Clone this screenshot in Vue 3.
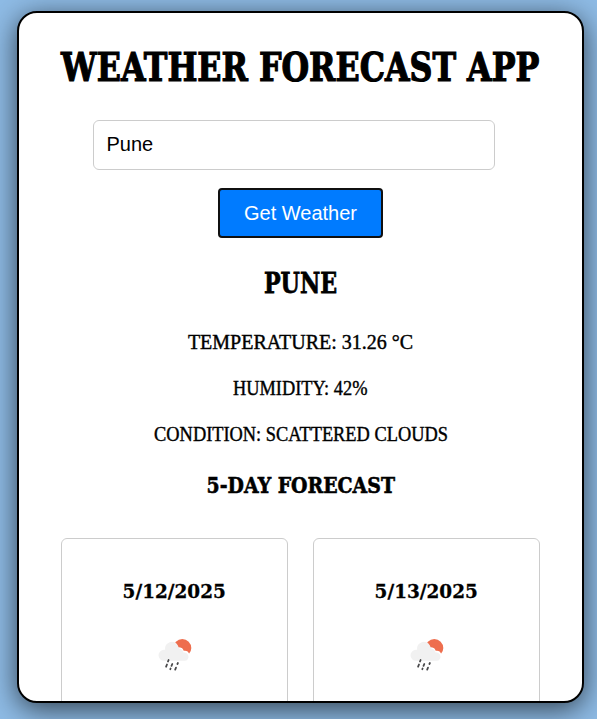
<script setup>
import { ref } from 'vue'

const city = ref('Pune')
const days = ['5/12/2025', '5/13/2025']
</script>

<template>
  <div class="page">
    <main class="panel">
      <h1><span>WEATHER FORECAST APP</span></h1>
      <input v-model="city" class="city" type="text" />
      <button class="go">Get Weather</button>
      <h2><span>PUNE</span></h2>
      <p class="temp"><span>TEMPERATURE: 31.26 °C</span></p>
      <p class="hum"><span>HUMIDITY: 42%</span></p>
      <p class="cond"><span>CONDITION: SCATTERED CLOUDS</span></p>
      <h3><span>5-DAY FORECAST</span></h3>
      <div class="days">
        <section v-for="day in days" :key="day" class="day">
          <h4><span>{{ day }}</span></h4>
          <svg class="icon" viewBox="0 0 50 50">
            <circle cx="32.300" cy="18" r="9" fill="#ee6e4e" />
            <path
              d="M24 22 l2-6 q2.500 2 3.500 1.200 a5 5 0 0 1 4.200 3.600 a5 5 0 0 1 5.600 3.300 l2 1.500 v5 h-12z"
              fill="#fff"
            />
            <path
              d="M14 30.800 a5.500 5.500 0 0 1 0-11 h1.100 a6.800 6.800 0 0 1 12.800-4.200 l1.200 3 a5 5 0 0 1 4.400 4 a4 4 0 0 1 4.900 3.300 a4 4 0 0 1-3.600 4.900z"
              fill="#f1f1f1"
            />
            <path
              d="M18.600 30 l-.6 1.500 M17 34.500 l-.9 2.200 M22.300 34 l-.8 1.900 M27.900 33 l-.5 1 M20.600 38.500 l-.3.700 M26 37.700 l-.8 1.900"
              stroke="#48484a"
              stroke-width="1.800"
              stroke-linecap="round"
            />
          </svg>
        </section>
      </div>
    </main>
  </div>
</template>

<style>
body {
  margin: 0;
  overflow: hidden;
}
</style>

<style scoped>
.page {
  box-sizing: border-box;
  height: 719px;
  padding: 11px 13px 16px 17px;
  background: #8ebbe5;
  overflow: hidden;
}
.panel {
  box-sizing: border-box;
  height: 692px;
  width: 567px;
  display: flex;
  flex-direction: column;
  align-items: center;
  padding: 26px 42px 0;
  border: 2px solid #000;
  border-radius: 20px;
  background: #fff;
  box-shadow: 0 6px 28px rgba(0, 0, 0, 0.65);
  overflow: hidden;
  color: #000;
}
h1, h2, h3, h4, p {
  margin: 0;
  flex: none;
  display: flex;
  align-items: center;
  justify-content: center;
  white-space: nowrap;
  font-family: "DejaVu Serif", serif;
  font-weight: 700;
}
h1 span, h2 span, h3 span, h4 span, p span {
  display: block;
}
h1 {
  height: 56px;
  font-size: 38.5px;
  -webkit-text-stroke: 1.2px #000;
}
h1 span {
  transform: scaleX(0.824);
}
.city {
  box-sizing: border-box;
  flex: none;
  width: 402px;
  height: 50px;
  margin: 25px 14px 0 0;
  padding: 0 13px 2px;
  border: 1px solid #ccc;
  border-radius: 6px;
  outline: none;
  background: #fff;
  color: #000;
  font: 20px "Liberation Sans", sans-serif;
}
.go {
  box-sizing: border-box;
  flex: none;
  width: 165px;
  height: 50px;
  margin: 18px 0 0;
  padding: 0;
  border: 2px solid #101010;
  border-radius: 4px;
  background: #007bff;
  color: #fff;
  font: 20px "Liberation Sans", sans-serif;
}
h2 {
  height: 40px;
  margin-top: 25px;
  font-size: 28.8px;
  -webkit-text-stroke: 0.8px #000;
}
h2 span {
  transform: scaleX(0.77);
}
p {
  height: 26px;
  font-family: "Liberation Serif", serif;
  font-size: 20px;
  font-weight: 400;
  -webkit-text-stroke: 0.4px #000;
}
.temp {
  margin-top: 26px;
}
.hum,
.cond {
  margin-top: 20px;
}
.hum span,
.cond span {
  transform: scaleX(0.918);
}
h3 {
  height: 30px;
  margin-top: 23px;
  font-size: 22px;
  -webkit-text-stroke: 0.6px #000;
}
h3 span {
  transform: scaleX(0.858);
}
.days {
  flex: none;
  display: grid;
  grid-template-columns: 227px 227px;
  gap: 25px;
  margin-top: 38px;
}
.day {
  box-sizing: border-box;
  height: 280px;
  display: flex;
  flex-direction: column;
  align-items: center;
  padding-top: 39px;
  border: 1px solid #ccc;
  border-radius: 6px;
}
h4 {
  height: 26px;
  font-size: 19px;
  -webkit-text-stroke: 0.3px #000;
}
h4 span {
  transform: scaleX(0.97);
}
.icon {
  width: 50px;
  height: 50px;
  margin-top: 26px;
}
</style>
